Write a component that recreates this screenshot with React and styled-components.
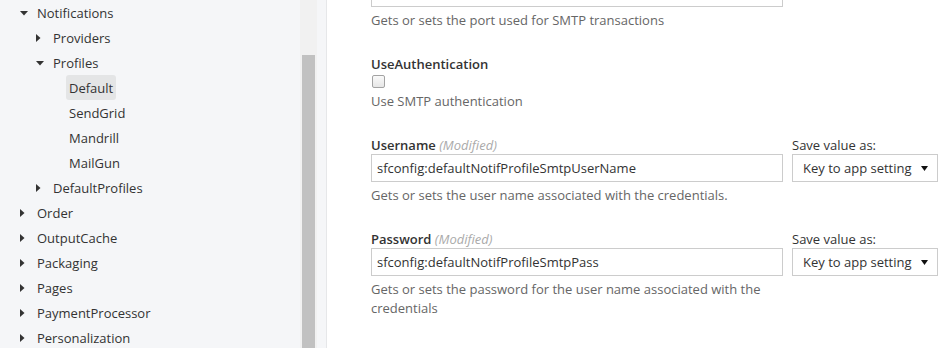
import React from 'react'
import styled, { createGlobalStyle } from 'styled-components'

const GlobalStyle = createGlobalStyle`
  html, body {
    margin: 0;
    padding: 0;
    background: #fff;
  }
  body {
    font-family: "Open Sans", "Liberation Sans", sans-serif;
    font-size: 13px;
    color: #333;
  }
`

const Page = styled.div`
  display: flex;
  width: 952px;
  height: 348px;
  overflow: hidden;
`

const Sidebar = styled.aside`
  display: flex;
  width: 326px;
  flex-shrink: 0;
  background: #f5f6f8;
  border-right: 1px solid #e6e7e9;
`

const Tree = styled.ul`
  list-style: none;
  margin: 0;
  padding: 0;
  width: 300px;
`

const Row = styled.li`
  display: flex;
  align-items: center;
  height: 25px;
  padding-left: ${p => 20 + p.$level * 16}px;
  white-space: nowrap;
`

const Toggle = styled.span`
  display: flex;
  align-items: center;
  width: 17px;
  height: 25px;
  flex-shrink: 0;
`

const NodeLabel = styled.span`
  display: flex;
  align-items: center;
  height: 25px;
  padding: 0 3px;
  margin-left: -3px;
  border-radius: 3px;
  background: ${p => (p.$selected ? '#e4e5e6' : 'transparent')};
  color: #333;
`

const ScrollTrack = styled.div`
  width: 17px;
  background: #f1f1f1;
  display: flex;
  justify-content: center;
`

const ScrollThumb = styled.div`
  width: 13px;
  margin-top: 55px;
  height: 320px;
  background: #c1c1c1;
`

const Main = styled.main`
  flex: 1;
  padding-left: 44px;
  margin-top: -21px;
  display: flex;
  flex-direction: column;
  gap: 25px;
`

const Field = styled.div`
  display: flex;
  flex-direction: column;
`

const FieldRow = styled.div`
  display: flex;
  gap: 9px;
`

const FieldMain = styled.div`
  width: 412px;
  display: flex;
  flex-direction: column;
`

const SaveAs = styled.div`
  width: 146px;
  display: flex;
  flex-direction: column;
`

const Label = styled.div`
  font-weight: ${p => (p.$plain ? 400 : 600)};
  line-height: 18px;
  color: #333;
`

const Modified = styled.span`
  font-weight: 400;
  font-style: italic;
  color: #aaa;
`

const TextInput = styled.input`
  box-sizing: border-box;
  width: 412px;
  height: 28px;
  border: 1px solid #ccc;
  padding: 0 5px;
  font: inherit;
  font-size: 13px;
  color: #333;
  outline: none;
`

const SelectBox = styled.div`
  box-sizing: border-box;
  height: 28px;
  border: 1px solid #ccc;
  display: flex;
  align-items: center;
  justify-content: space-between;
  padding: 0 9px 0 10px;
  color: #333;
  background: #fff;
`

const Check = styled.input`
  appearance: none;
  box-sizing: border-box;
  width: 13px;
  height: 13px;
  margin: 2px 0 0 1px;
  border: 1px solid #a3a3a3;
  border-radius: 2px;
  background: linear-gradient(#fafafa, #e6e6e6);
`

const Description = styled.div`
  margin-top: 4px;
  line-height: 19px;
  color: #666;
  width: 412px;
`

const Caret = ({ open }) => (
  <svg width="8" height="8" viewBox="0 0 8 8">
    {open ? (
      <polygon points="0,2 8,2 4,6.5" fill="#333" />
    ) : (
      <polygon points="0,0 4.5,4 0,8" fill="#333" />
    )}
  </svg>
)

const Arrow = () => (
  <svg width="7" height="5" viewBox="0 0 7 5">
    <polygon points="0,0 7,0 3.5,5" fill="#111" />
  </svg>
)

const nodes = [
  { name: 'Notifications', level: 0, state: 'open' },
  { name: 'Providers', level: 1, state: 'closed' },
  { name: 'Profiles', level: 1, state: 'open' },
  { name: 'Default', level: 2, selected: true },
  { name: 'SendGrid', level: 2 },
  { name: 'Mandrill', level: 2 },
  { name: 'MailGun', level: 2 },
  { name: 'DefaultProfiles', level: 1, state: 'closed' },
  { name: 'Order', level: 0, state: 'closed' },
  { name: 'OutputCache', level: 0, state: 'closed' },
  { name: 'Packaging', level: 0, state: 'closed' },
  { name: 'Pages', level: 0, state: 'closed' },
  { name: 'PaymentProcessor', level: 0, state: 'closed' },
  { name: 'Personalization', level: 0, state: 'closed' },
]

const TreeNode = ({ node }) => (
  <Row $level={node.level}>
    <Toggle>{node.state && <Caret open={node.state === 'open'} />}</Toggle>
    <NodeLabel $selected={node.selected}>{node.name}</NodeLabel>
  </Row>
)

const ModifiedField = ({ label, value, description }) => (
  <Field>
    <FieldRow>
      <FieldMain>
        <Label>
          {label} <Modified>(Modified)</Modified>
        </Label>
        <TextInput defaultValue={value} />
      </FieldMain>
      <SaveAs>
        <Label $plain>Save value as:</Label>
        <SelectBox>
          <span>Key to app setting</span>
          <Arrow />
        </SelectBox>
      </SaveAs>
    </FieldRow>
    <Description>{description}</Description>
  </Field>
)

const App = () => (
  <>
    <GlobalStyle />
    <Page>
      <Sidebar>
        <Tree>
          {nodes.map(n => (
            <TreeNode key={n.name} node={n} />
          ))}
        </Tree>
        <ScrollTrack>
          <ScrollThumb />
        </ScrollTrack>
      </Sidebar>
      <Main>
        <Field>
          <TextInput defaultValue="" />
          <Description>Gets or sets the port used for SMTP transactions</Description>
        </Field>
        <Field>
          <Label>UseAuthentication</Label>
          <Check type="checkbox" />
          <Description>Use SMTP authentication</Description>
        </Field>
        <ModifiedField
          label="Username"
          value="sfconfig:defaultNotifProfileSmtpUserName"
          description="Gets or sets the user name associated with the credentials."
        />
        <ModifiedField
          label="Password"
          value="sfconfig:defaultNotifProfileSmtpPass"
          description="Gets or sets the password for the user name associated with the credentials"
        />
      </Main>
    </Page>
  </>
)

export default App
